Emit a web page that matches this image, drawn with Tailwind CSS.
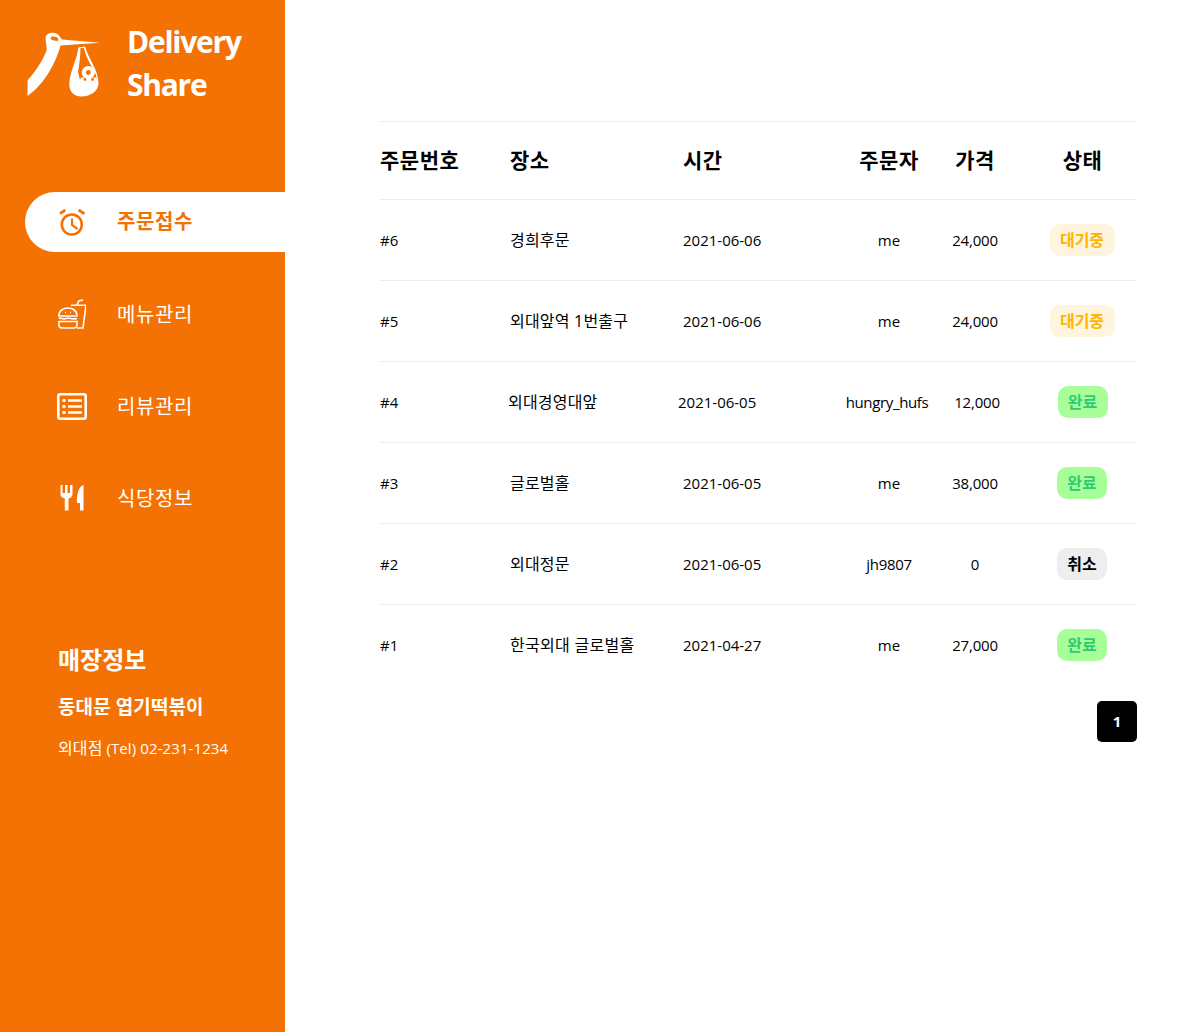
<!DOCTYPE html>
<html lang="ko">
<head>
  <meta charset="UTF-8">
  <title>Delivery Share</title>
  <script src="https://cdn.jsdelivr.net/npm/@tailwindcss/browser@4"></script>
</head>
<body class="bg-white text-black font-['Open_Sans','Noto_Sans_CJK_KR',sans-serif]">
  <div class="flex min-h-[1032px]">
    <!-- sidebar -->
    <aside class="w-[285px] shrink-0 bg-[#f47204] text-white">
      <div class="flex h-[192px] items-start">
        <svg class="mt-[30px] ml-[25px] w-[80px] h-[70px] shrink-0" viewBox="25 30 80 70" fill="#fff">
          <path d="M27.500 96 L27.700 80 C35 72 42 62 46.700 50 C47 45 45 41 45.700 36.700 C47 33 52 32 56.500 33.500 C59.500 35.500 60.500 38 62 39.500 L100 42.700 L60.500 45.500 C57 60 45 84 27.500 96Z"/>
          <ellipse cx="54.500" cy="38.700" rx="4" ry="1.900" fill="#f47204" transform="rotate(15 54.500 38.700)"/>
          <path d="M78.300 47.500 L85 46.500 C88 58 98.500 70 98.500 83 C98.500 92 89 96.500 81.700 96.500 C73 96.500 69 91 69.300 83 C70 71 77 60 78.300 47.500Z"/>
          <path d="M80.500 48 L84 48 C86 58 92 66 96 75 L96.500 80 L80 80 L78 72 C79.500 64 80.300 56 80.500 48Z" fill="#f47204"/>
          <circle cx="88.300" cy="72.500" r="6.500"/>
          <circle cx="88.300" cy="72.500" r="2.400" fill="#f47204"/>
          <path d="M79.500 81 L81 77.500 L96 77.500 L97.500 82 L80 83Z"/>
          <circle cx="85" cy="79.500" r="1.400" fill="#f47204"/>
          <circle cx="92.500" cy="79.500" r="1.400" fill="#f47204"/>
        </svg>
        <h1 class="mt-[20px] ml-[22px] text-[30px] leading-[43px] font-bold tracking-[-1.250px]">Delivery<br>Share</h1>
      </div>

      <nav>
        <a class="ml-[25px] flex h-[60px] items-center rounded-l-[30px] bg-white pl-[33px] text-[#f47204]">
          <svg class="w-[28px] h-[28px] shrink-0" viewBox="0 0 28 28" fill="none" stroke="currentColor" stroke-width="2.600">
            <circle cx="13.800" cy="16.500" r="10"/>
            <path d="M14 10.500 V17 L19.500 21" stroke-width="2.200"/>
            <path d="M2 5.600 L7.300 2 M20.700 2 L26.500 5.800" stroke-width="2.800"/>
          </svg>
          <span class="ml-[31px] text-[20px] leading-none font-semibold tracking-[0.6px]">주문접수</span>
        </a>
        <a class="ml-[58px] mt-[32px] flex h-[60px] items-center">
          <svg class="w-[28px] h-[30px] shrink-0" viewBox="0 0 28 30" fill="none" stroke="currentColor" stroke-width="1.600">
            <path d="M13 6.200 H28 L25 29 H19"/>
            <path d="M19 6 L20.700 2 L25 1"/>
            <path d="M0.800 17 C0.800 11 6 9 10 9 C14 9 19 11 19 17 Z"/>
            <path d="M0.800 19.500 C3 18 5 21 8 19.500 C11 18 14 21 19 19.500"/>
            <path d="M1 22.500 H19 V26 C19 28 18 29 16 29 H4 C2 29 1 28 1 26 Z"/>
            <path d="M7 13.500 H8 M12 13.500 H13"/>
          </svg>
          <span class="ml-[31px] translate-y-[1px] text-[20px] leading-none tracking-[0.6px]">메뉴관리</span>
        </a>
        <a class="ml-[57px] mt-[32px] flex h-[60px] items-center">
          <svg class="w-[30px] h-[27px] shrink-0" viewBox="0 0 30 27" fill="none" stroke="currentColor" stroke-width="2.600">
            <rect x="1.300" y="1.300" width="27.400" height="24.400" rx="2"/>
            <path d="M11 7.500 H25 M11 13.500 H25 M11 19.500 H25" stroke-width="2.600"/>
            <circle cx="7" cy="7.500" r="1.800" fill="currentColor" stroke="none"/>
            <circle cx="7" cy="13.500" r="1.800" fill="currentColor" stroke="none"/>
            <circle cx="7" cy="19.500" r="1.800" fill="currentColor" stroke="none"/>
          </svg>
          <span class="ml-[30px] translate-y-[1px] text-[20px] leading-none tracking-[0.6px]">리뷰관리</span>
        </a>
        <a class="ml-[60px] mt-[32px] flex h-[60px] items-center">
          <svg class="w-[24px] h-[26px] shrink-0" viewBox="0 0 24 26" fill="#fff">
            <path d="M0.500 0 H2.500 V8 H5 V0 H7.500 V8 H10 V0 H12.500 V9 C12.500 12 10 13 8.500 13.500 V25.500 H4.800 V13.500 C3 13 0.500 12 0.500 9 Z"/>
            <path d="M23.500 0 V25.500 H20 V18 H17 C16.500 9 18.500 2 23.500 0 Z"/>
          </svg>
          <span class="ml-[33px] translate-y-[1px] text-[20px] leading-none tracking-[0.6px]">식당정보</span>
        </a>
      </nav>

      <div class="ml-[58px] mt-[114px]">
        <h2 class="text-[24px] leading-[36px] font-bold">매장정보</h2>
        <p class="mt-[15px] text-[19px] leading-[28px] font-bold tracking-[0.1px]">동대문 엽기떡볶이</p>
        <p class="mt-[17px] text-[15px] leading-[20px] tracking-[0.1px]"><span class="text-[16px]">외대점</span> (Tel) 02-231-1234</p>
      </div>
    </aside>

    <!-- orders -->
    <main class="ml-[95px] mt-[121px] w-[757px]">
      <div class="grid h-[79px] grid-cols-[130px_173px_172px_68px_104px_110px] items-center border-y border-[#eeeeee] text-[21px] font-semibold tracking-[0.5px]">
        <div>주문번호</div>
        <div>장소</div>
        <div>시간</div>
        <div class="flex justify-center whitespace-nowrap">주문자</div>
        <div class="text-center">가격</div>
        <div class="pl-[1px] text-center">상태</div>
      </div>

      <div class="grid h-[81px] grid-cols-[130px_173px_172px_68px_104px_110px] items-center border-b border-[#eeeeee] text-[15px]">
        <div>#6</div>
        <div class="text-[16px] tracking-[0.2px]">경희후문</div>
        <div>2021-06-06</div>
        <div class="flex justify-center whitespace-nowrap">me</div>
        <div class="text-center tracking-[-0.2px]">24,000</div>
        <div class="flex justify-center"><span class="flex h-[32px] w-[65px] items-center justify-center rounded-[10px] bg-[#fff5de] text-[16px] font-semibold text-[#ffb300]">대기중</span></div>
      </div>
      <div class="grid h-[81px] grid-cols-[130px_173px_172px_68px_104px_110px] items-center border-b border-[#eeeeee] text-[15px]">
        <div>#5</div>
        <div class="text-[16px] tracking-[0.2px]">외대앞역 1번출구</div>
        <div>2021-06-06</div>
        <div class="flex justify-center whitespace-nowrap">me</div>
        <div class="text-center tracking-[-0.2px]">24,000</div>
        <div class="flex justify-center"><span class="flex h-[32px] w-[65px] items-center justify-center rounded-[10px] bg-[#fff5de] text-[16px] font-semibold text-[#ffb300]">대기중</span></div>
      </div>
      <div class="grid h-[81px] grid-cols-[130px_173px_172px_68px_104px_110px] items-center border-b border-[#eeeeee] text-[15px]">
        <div>#4</div>
        <div class="-ml-[2px] text-[16px] tracking-[0.2px]">외대경영대앞</div>
        <div class="-ml-[5px]">2021-06-05</div>
        <div class="-ml-[4px] flex justify-center whitespace-nowrap tracking-[-0.35px]">hungry_hufs</div>
        <div class="pl-[4px] text-center tracking-[-0.2px]">12,000</div>
        <div class="flex justify-center pl-[1px]"><span class="flex h-[32px] w-[50px] items-center justify-center rounded-[10px] bg-[#a8ff9a] text-[16px] font-semibold text-[#2ecc71]">완료</span></div>
      </div>
      <div class="grid h-[81px] grid-cols-[130px_173px_172px_68px_104px_110px] items-center border-b border-[#eeeeee] text-[15px]">
        <div>#3</div>
        <div class="text-[16px] tracking-[0.2px]">글로벌홀</div>
        <div>2021-06-05</div>
        <div class="flex justify-center whitespace-nowrap">me</div>
        <div class="text-center tracking-[-0.2px]">38,000</div>
        <div class="flex justify-center"><span class="flex h-[32px] w-[50px] items-center justify-center rounded-[10px] bg-[#a8ff9a] text-[16px] font-semibold text-[#2ecc71]">완료</span></div>
      </div>
      <div class="grid h-[81px] grid-cols-[130px_173px_172px_68px_104px_110px] items-center border-b border-[#eeeeee] text-[15px]">
        <div>#2</div>
        <div class="text-[16px] tracking-[0.2px]">외대정문</div>
        <div>2021-06-05</div>
        <div class="flex justify-center whitespace-nowrap tracking-[-0.3px]">jh9807</div>
        <div class="text-center">0</div>
        <div class="flex justify-center"><span class="flex h-[32px] w-[50px] items-center justify-center rounded-[10px] bg-[#eeeeee] text-[16px] font-semibold">취소</span></div>
      </div>
      <div class="grid h-[80px] grid-cols-[130px_173px_172px_68px_104px_110px] items-center text-[15px]">
        <div>#1</div>
        <div class="text-[16px] tracking-[0.3px]">한국외대 글로벌홀</div>
        <div>2021-04-27</div>
        <div class="flex justify-center whitespace-nowrap">me</div>
        <div class="text-center tracking-[-0.2px]">27,000</div>
        <div class="flex justify-center"><span class="flex h-[32px] w-[50px] items-center justify-center rounded-[10px] bg-[#a8ff9a] text-[16px] font-semibold text-[#2ecc71]">완료</span></div>
      </div>

      <div class="mt-[16px] flex justify-end">
        <button class="flex h-[41px] w-[40px] items-center justify-center rounded-[5px] bg-black text-[15px] font-bold text-white">1</button>
      </div>
    </main>
  </div>
</body>
</html>
